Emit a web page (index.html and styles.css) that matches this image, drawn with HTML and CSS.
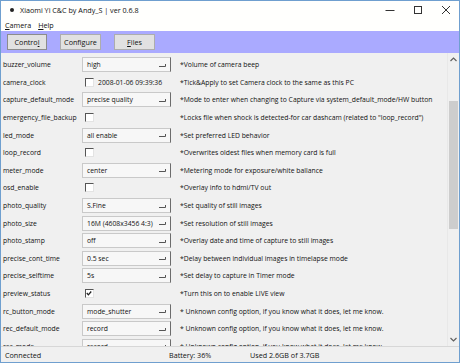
FILE: index.html
```html
<!DOCTYPE html>
<html lang="en">
<head>
    <meta charset="UTF-8">
    <title>Xiaomi Yi C&amp;C by Andy_S | ver 0.6.8</title>
    <link rel="stylesheet" href="styles.css">
</head>
<body>

    <div class="window">

        <!-- Title bar -->
        <div class="titlebar">
            <span class="app-icon"></span>
            <span class="title">Xiaomi Yi C&amp;C by Andy_S | ver 0.6.8</span>
            <div class="win-controls">
                <svg class="win-btn" width="10" height="10" viewBox="0 0 10 10"><path d="M0.5 5.5H9.5" stroke="#333" stroke-width="1"/></svg>
                <svg class="win-btn" width="10" height="10" viewBox="0 0 10 10"><rect x="1.5" y="1.5" width="7" height="7" fill="none" stroke="#333" stroke-width="1"/></svg>
                <svg class="win-btn" width="10" height="10" viewBox="0 0 10 10"><path d="M1 1L9 9M9 1L1 9" stroke="#333" stroke-width="1"/></svg>
            </div>
        </div>

        <!-- Menu -->
        <div class="menubar">
            <span class="menu-item"><u>C</u>amera</span>
            <span class="menu-item"><u>H</u>elp</span>
        </div>

        <!-- Tabs -->
        <div class="toolbar">
            <button class="tool-btn active">Contro<u>l</u></button>
            <button class="tool-btn">Configure</button>
            <button class="tool-btn"><u>F</u>iles</button>
        </div>

        <div class="content">
            <div class="settings" id="settings"></div>

            <div class="scrollbar">
                <svg class="scroll-arrow" width="7" height="5" viewBox="0 0 7 5"><path d="M0.5 4L3.5 1L6.5 4" fill="none" stroke="#606060" stroke-width="1.2"/></svg>
                <div class="scroll-track">
                    <div class="scroll-thumb"></div>
                </div>
                <svg class="scroll-arrow" width="7" height="5" viewBox="0 0 7 5"><path d="M0.5 1L3.5 4L6.5 1" fill="none" stroke="#606060" stroke-width="1.2"/></svg>
            </div>
        </div>

        <div class="statusbar">
            <span class="status-conn">Connected</span>
            <span class="status-batt">Battery: 36%</span>
            <span class="status-used">Used 2.6GB of 3.7GB</span>
        </div>
    </div>

    <script>
        // name, kind, value, description
        const settings = [
            ['buzzer_volume', 'combo', 'high', '*Volume of camera beep'],
            ['camera_clock', 'check', '2008-01-06 09:39:36', '*Tick&Apply to set Camera clock to the same as this PC'],
            ['capture_default_mode', 'combo', 'precise quality', '*Mode to enter when changing to Capture via system_default_mode/HW button'],
            ['emergency_file_backup', 'check', '', '*Locks file when shock is detected-for car dashcam (related to "loop_record")'],
            ['led_mode', 'combo', 'all enable', '*Set preferred LED behavior'],
            ['loop_record', 'check', '', '*Overwrites oldest files when memory card is full'],
            ['meter_mode', 'combo', 'center', '*Metering mode for exposure/white ballance'],
            ['osd_enable', 'check', '', '*Overlay info to hdmi/TV out'],
            ['photo_quality', 'combo', 'S.Fine', '*Set quality of still images'],
            ['photo_size', 'combo', '16M (4608x3456 4:3)', '*Set resolution of still images'],
            ['photo_stamp', 'combo', 'off', '*Overlay date and time of capture to still images'],
            ['precise_cont_time', 'combo', '0.5 sec', '*Delay between individual images in timelapse mode'],
            ['precise_selftime', 'combo', '5s', '*Set delay to capture in Timer mode'],
            ['preview_status', 'checked', '', '*Turn this on to enable LIVE view'],
            ['rc_button_mode', 'combo', 'mode_shutter', '* Unknown config option, if you know what it does, let me know.'],
            ['rec_default_mode', 'combo', 'record', '* Unknown config option, if you know what it does, let me know.'],
            ['rec_mode', 'combo', 'record', '* Unknown config option, if you know what it does, let me know.']
        ];

        const arrow = '<svg class="combo-arrow" width="8" height="5" viewBox="0 0 8 5"><path d="M0 3.5H6.5V1" fill="none" stroke="#555" stroke-width="1"/></svg>';
        const tick = '<svg width="9" height="9" viewBox="0 0 9 9"><path d="M2 4L3.8 6L7 2.2" fill="none" stroke="#222" stroke-width="1.5"/></svg>';

        const list = document.getElementById('settings');
        settings.forEach(function(s) {
            let field = '';
            if (s[1] === 'combo') {
                field = '<div class="combo"><span class="combo-text">' + s[2] + '</span>' + arrow + '</div>';
            } else {
                field = '<div class="check-wrap"><span class="checkbox">' + (s[1] === 'checked' ? tick : '') + '</span>' +
                        (s[2] ? '<span class="check-text">' + s[2] + '</span>' : '') + '</div>';
            }
            const row = document.createElement('div');
            row.className = 'row';
            row.innerHTML = '<span class="name">' + s[0] + '</span>' + field +
                            '<span class="desc">' + s[3].replace(/&/g, '&amp;') + '</span>';
            list.appendChild(row);
        });
    </script>

</body>
</html>
```

FILE: styles.css
```css
body {
    margin: 0;
    padding: 0;
    font-family: "Open Sans", "Noto Sans", sans-serif;
    font-size: 6.8px;
    color: #111;
    background: #fff;
}

.window {
    width: 458px;
    height: 361px;
    border: 1px solid #6f9fcf;
    display: flex;
    flex-direction: column;
    background: #f0f0f0;
    overflow: hidden;
}

/* Title bar */
.titlebar {
    height: 17px;
    background: #fffffd;
    display: flex;
    align-items: center;
    padding-left: 9px;
}

.app-icon {
    width: 4px;
    height: 4px;
    border-radius: 50%;
    background: #222;
    margin-right: 6px;
}

.title {
    font-size: 7.2px;
    flex: 1;
}

.win-controls {
    display: flex;
    gap: 18px;
    padding-right: 8px;
}

.win-btn {
    display: block;
}

/* Menu */
.menubar {
    height: 13px;
    background: #fffffd;
    display: flex;
    align-items: center;
    padding-left: 4px;
    gap: 7px;
    font-size: 7.2px;
}

/* Toolbar */
.toolbar {
    height: 22px;
    background: #aaaaff;
    display: flex;
    align-items: center;
    padding-left: 6px;
    gap: 13px;
}

.tool-btn {
    width: 41px;
    height: 16px;
    padding: 0;
    font-family: inherit;
    font-size: 7.2px;
    color: #111;
    background: #e1e1e1;
    border: 1px solid #adadad;
}

.tool-btn.active {
    width: 40px;
    border-color: #8c8c8c;
}

/* Settings list */
.content {
    flex: 1;
    display: flex;
    min-height: 0;
    border-bottom: 1px solid #d7d7d7;
}

.settings {
    flex: 1;
    padding-top: 3px;
    overflow: hidden;
}

.row {
    display: grid;
    grid-template-columns: 79px 98px 1fr;
    height: 17.6px;
    align-items: center;
    padding-left: 2px;
}

.name, .desc {
    white-space: nowrap;
}

.combo {
    width: 89px;
    height: 15px;
    box-sizing: border-box;
    background: #f7f7f7;
    border: 1px solid #c9c9c9;
    border-right: 1px solid #6c6c6c;
    display: flex;
    align-items: center;
    padding-left: 4px;
    padding-right: 3px;
}

.combo-text {
    flex: 1;
    white-space: nowrap;
}

.combo-arrow {
    display: block;
    margin-top: 1px;
}

.check-wrap {
    display: flex;
    align-items: center;
    padding-left: 3px;
    gap: 4px;
}

.checkbox {
    width: 9px;
    height: 9px;
    box-sizing: border-box;
    background: #fff;
    border-top: 1px solid #555;
    border-left: 1px solid #555;
    border-right: 1px solid #e3e3e3;
    border-bottom: 1px solid #e3e3e3;
    display: flex;
}

.checkbox svg {
    margin: -1px 0 0 -1px;
}

/* Scrollbar */
.scrollbar {
    width: 11px;
    display: flex;
    flex-direction: column;
    align-items: center;
    background: #f0f0f0;
    border-left: 1px solid #e8e8e8;
}

.scroll-arrow {
    margin: 4px 0;
}

.scroll-track {
    flex: 1;
    width: 100%;
    padding-top: 35px;
}

.scroll-thumb {
    width: 9px;
    height: 128px;
    margin: 0 auto;
    background: #cdcdcd;
}

/* Status bar */
.statusbar {
    height: 15px;
    display: flex;
    align-items: center;
    padding-left: 4px;
    font-size: 7.2px;
}

.status-conn {
    width: 164px;
}

.status-batt {
    width: 81px;
}
```
